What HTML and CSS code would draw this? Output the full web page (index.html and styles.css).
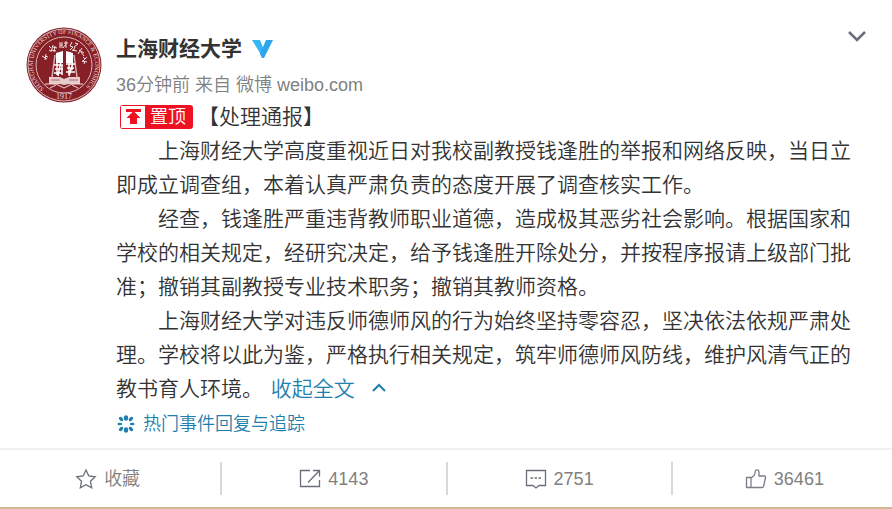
FILE: index.html
```html
<!DOCTYPE html>
<html lang="zh-CN">
<head>
<meta charset="utf-8">
<meta name="viewport" content="width=device-width, initial-scale=1">
<title>上海财经大学</title>
<link rel="stylesheet" href="styles.css">
</head>
<body>
<article class="card">
  <div class="post">
    <a class="avatar" href="#" aria-label="上海财经大学">
      <svg viewBox="0 0 76 76" width="76" height="76">
        <defs>
          <path id="ring-top" d="M18.200 61.600A31 31 0 1 1 57.800 61.600"/>
        </defs>
        <circle cx="38" cy="38" r="37.500" fill="#861f26"/>
        <circle cx="38" cy="38" r="36" fill="none" stroke="#dcb9ba" stroke-width="1"/>
        <circle cx="38" cy="38" r="28" fill="none" stroke="#dcb9ba" stroke-width="1"/>
        <text class="seal-ring"><textPath href="#ring-top">SHANGHAI UNIVERSITY OF FINANCE &amp; ECONOMICS</textPath></text>
        <text class="seal-year" x="38" y="72" text-anchor="middle">1917</text>
        <g fill="none" stroke="#f3e3e3" stroke-width="1">
          <path d="M16 29l5 3M20 27l-1 6M19 29l3 1"/>
          <path d="M23 19l2 2M23 23l2 1M27 18l-2 7M27 20l4 1M26 23l4 1M29 19l-1 6"/>
          <path d="M34 15v6M36 15v6M34 18h2M38 16h4M40 14v7M40 17l-3 4"/>
          <path d="M46 15l-2 4 3 1-3 3M49 16l3 1-4 3M49 20l-2 4M46 23l5 1"/>
          <path d="M53 23l5 3M56 21l-4 6M55 25l3 4"/>
          <path d="M57 30l2 2M61 30l-5 5M56 34l5 1M59 34l-1 3"/>
        </g>
        <path d="M30 26l7-2v12h-7zM40 24l7 2v10h-7z" fill="#fff"/>
        <path d="M29 28l-3 22M48 28l3 22" fill="none" stroke="#d9b0b2" stroke-width="1.500"/>
        <g fill="none" stroke="#fff" stroke-width="1.500">
          <path d="M28 38h9M29 42h8M28 46h8M31 35v13M35 34l-3 15M36 38v10"/>
          <path d="M40 37h9M41 41h7M40 45h9M43 35v13M47 36l-4 13M46 36v7"/>
        </g>
        <path d="M23 50h11l4 2 5-2h11v7H43l-5 1-4-1H23z" fill="#e6cccb"/>
        <path d="M25 53h9M43 53h9" stroke="#b0686c" stroke-width="1"/>
        <path d="M19 57h11l8 4 8-4h11M30 58l-6 3M46 58l6 3" fill="none" stroke="#f0dcdc" stroke-width="1"/>
      </svg>
    </a>
    <div class="main">
      <header class="head">
        <div>
          <h1 class="name"><a href="#">上海财经大学</a>
            <svg viewBox="0 0 22 20" width="22" height="20" aria-hidden="true"><path d="M0 1h8l4 10-1 8z" fill="#35b6f5"/><path d="M14 1h7l-9 18h-2l-2-4z" fill="#2ca4ee"/></svg>
          </h1>
          <p class="meta"><a href="#">36分钟前</a> 来自 <a href="#">微博 weibo.com</a></p>
        </div>
        <button class="more" type="button" aria-label="更多">
          <svg viewBox="0 0 20 12" width="20" height="12"><path d="M2 2l8 8 8-8" fill="none" stroke="#696e78" stroke-width="2.500"/></svg>
        </button>
      </header>
      <div class="text">
        <p class="title"><span class="pin"><svg viewBox="0 0 24 22" width="24" height="22" aria-hidden="true"><path d="M0 0h24v22H0z" fill="#fff"/><path d="M5 3h15v3H5zM12.500 5l7 7H16v6H9v-6H5.500z" fill="#ee1122"/></svg><span class="pin-label">置顶</span></span>【处理通报】</p>
        <p class="para">上海财经大学高度重视近日对我校副教授钱逢胜的举报和网络反映，当日立即成立调查组，本着认真严肃负责的态度开展了调查核实工作。</p>
        <p class="para">经查，钱逢胜严重违背教师职业道德，造成极其恶劣社会影响。根据国家和学校的相关规定，经研究决定，给予钱逢胜开除处分，并按程序报请上级部门批准；撤销其副教授专业技术职务；撤销其教师资格。</p>
        <p class="para">上海财经大学对违反师德师风的行为始终坚持零容忍，坚决依法依规严肃处理。学校将以此为鉴，严格执行相关规定，筑牢师德师风防线，维护风清气正的教书育人环境。 <a class="fold" href="#">收起全文<svg viewBox="0 0 16 10" width="16" height="10" aria-hidden="true"><path d="M2 8l6-6 6 6" fill="none" stroke="#1f7fae" stroke-width="2"/></svg></a></p>
      </div>
      <a class="topic" href="#">
        <svg viewBox="0 0 18 18" width="18" height="18" aria-hidden="true">
          <g fill="#1f7fae">
            <ellipse cx="9" cy="3" rx="2.200" ry="2.800"/><ellipse cx="9" cy="15" rx="2.200" ry="2.800"/><ellipse cx="2.800" cy="9" rx="2.400" ry="1.300"/><ellipse cx="15.200" cy="9" rx="2.400" ry="1.300"/>
            <g transform="rotate(45 9 9)"><ellipse cx="9" cy="2" rx="1.700" ry="2.600"/><ellipse cx="9" cy="16" rx="1.700" ry="2.600"/><ellipse cx="2" cy="9" rx="2.600" ry="1.700"/><ellipse cx="16" cy="9" rx="2.600" ry="1.700"/></g>
          </g>
        </svg>
        <span>热门事件回复与追踪</span>
      </a>
    </div>
  </div>
  <footer class="actions">
    <button class="action" type="button">
      <svg viewBox="0 0 22 22" width="22" height="22" aria-hidden="true"><path d="M11 2l2.800 6 6.400.8-4.700 4.500 1.200 6.500-5.700-3.100-5.700 3.100 1.200-6.500L1.800 8.800 8.200 8z" fill="none" stroke="#696e78" stroke-width="1.300"/></svg>
      <span class="label">收藏</span>
    </button>
    <button class="action" type="button">
      <svg viewBox="0 0 22 22" width="22" height="22" aria-hidden="true"><path d="M11 2.500H1.500v16h19V12M14 2.500h6.500v6M20 3L9 14.500" fill="none" stroke="#696e78" stroke-width="1.300"/></svg>
      <span class="label">4143</span>
    </button>
    <button class="action" type="button">
      <svg viewBox="0 0 22 22" width="22" height="22" aria-hidden="true"><path d="M1.500 2.500h19v15h-6.500l-3 2.500-3-2.500H1.500z" fill="none" stroke="#696e78" stroke-width="1.300"/><path d="M5.500 10H8M9.500 10H12M13.500 10H16" stroke="#696e78" stroke-width="1.300"/></svg>
      <span class="label">2751</span>
    </button>
    <button class="action" type="button">
      <svg viewBox="0 0 22 22" width="22" height="22" aria-hidden="true"><path d="M1.500 9.500h4.500v10H1.500zM6 10l3-2.500c1-1 1-2 1.200-4 .2-2.200 3.800-2.200 3.800.5V8h5.500c.9 0 1.200.8 1 1.500l-2 9c-.2.700-.7 1-1.500 1H6" fill="none" stroke="#7b7e85" stroke-width="1.300" stroke-linejoin="round"/></svg>
      <span class="label">36461</span>
    </button>
  </footer>
</article>
</body>
</html>
```
FILE: styles.css
```css
* {
  box-sizing: border-box;
}

body {
  margin: 0;
  background: #fff;
  color: #333;
  font-family: "Liberation Sans", "Noto Sans CJK SC", sans-serif;
  font-weight: 350;
  text-spacing-trim: space-all;
  overflow-x: hidden;
}

a {
  color: inherit;
  text-decoration: none;
}

h1,
p {
  margin: 0;
}

svg {
  flex: none;
}

button {
  padding: 0;
  border: 0;
  background: none;
  color: inherit;
  font: inherit;
  cursor: pointer;
}

.card {
  border-bottom: 2px solid #cdba91;
}

.post {
  display: flex;
  gap: 14px;
  padding: 27px 40px 8px 26px;
}

.avatar {
  flex: none;
}

.avatar svg {
  display: block;
}

.seal-ring {
  fill: #f0dcdc;
  font: 6px "Liberation Serif", serif;
}

.seal-year {
  fill: #f0dcdc;
  font: 8px "Liberation Serif", serif;
}

.main {
  flex: 1;
  min-width: 0;
}

.head {
  display: flex;
  justify-content: space-between;
  align-items: flex-start;
  margin-right: -15px;
  padding-bottom: 1px;
}

.name {
  display: flex;
  align-items: center;
  gap: 10px;
  font-size: 21px;
  font-weight: 700;
  line-height: 44px;
}

.meta {
  color: #808080;
  font-size: 18px;
  line-height: 28px;
}

.more {
  display: flex;
  padding-top: 3px;
}

.text {
  font-size: 21px;
  line-height: 34px;
}

.title {
  display: flex;
  align-items: center;
  gap: 5px;
  padding-left: 4px;
}

.pin {
  display: flex;
  align-items: center;
  height: 24px;
  padding: 1px;
  border-radius: 3px;
  background: #ee1122;
  color: #fff;
  font-size: 18px;
  line-height: 22px;
}

.pin-label {
  padding: 0 6px 0 5px;
}

.para {
  text-indent: 2em;
}

.fold,
.topic {
  color: #1f7fae;
}

.fold {
  padding-left: 2px;
}

.fold svg {
  margin-left: 16px;
  vertical-align: 3px;
}

.topic {
  display: flex;
  align-items: center;
  gap: 8px;
  width: fit-content;
  padding: 1px 0 0 1px;
  font-size: 18px;
  line-height: 34px;
}

.post {
  padding-bottom: 7px;
}

.actions {
  display: grid;
  grid-template-columns: repeat(4, 1fr);
  margin: 0 -4px 0 -5px;
  padding: 12px 0;
  border-top: 2px solid #f0f0f0;
}

.action {
  display: flex;
  align-items: center;
  justify-content: center;
  gap: 7px;
  height: 33px;
  color: #808080;
  font-size: 18px;
}

.label {
  line-height: 22px;
}

.action + .action {
  border-left: 2px solid #d9d9d9;
}
```
